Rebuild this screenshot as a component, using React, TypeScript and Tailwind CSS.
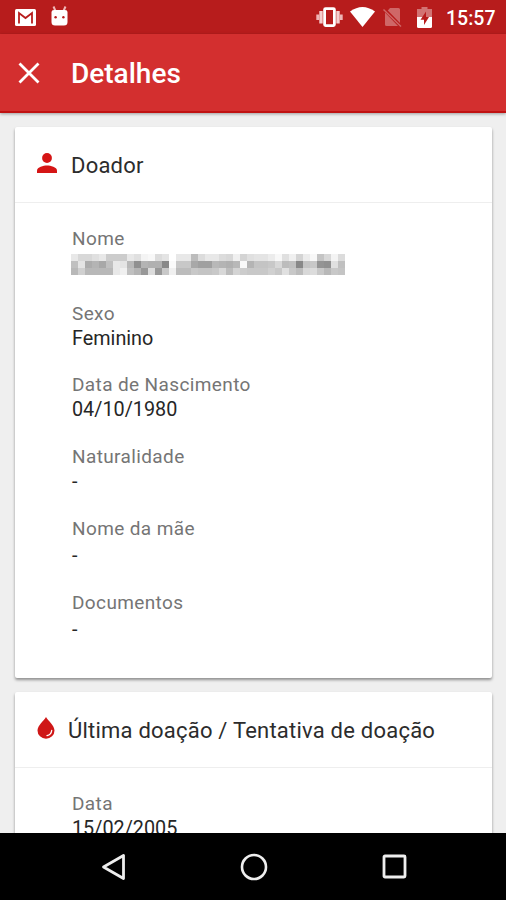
import React from "react";
import clsx from "clsx";

// Grey levels of the redacted name, one hex pair per block.
const REDACTED_ROWS = [
  "e8d8d8e0e8cccccce8e0f4f8dce4ffe8e8bcdce8e8dcd8f0d4e0e4e4ecf8e0f0d4ecf8c4d8f4dc",
  "c0e4acb4a8c0e8e4b890b4b0b088fac8c8a8a0a0b8b4b0b8f8b4c4c4c8d8bcc088c4c89490e0c0",
  "b8d0b8b8b8b8e8f0c0b498dc98c8f0bcbcc8c4c4c8d8bcd4ccc8c8c8d0c8e0c8bcd8dcc8b8c8c4",
];

const RedactedName = () => (
  <div className="flex flex-col w-[274px] h-[21px] -ml-px mt-[3px]">
    {REDACTED_ROWS.map((row) => (
      <div key={row} className="flex flex-1">
        {(row.match(/../g) ?? []).map((level, index) => (
          <span
            key={index}
            className="flex-1"
            style={{ backgroundColor: `#${level}${level}${level}` }}
          />
        ))}
      </div>
    ))}
  </div>
);

const MailIcon = () => (
  <svg className="w-[21px] h-[17px]" viewBox="0 0 21 17">
    <rect width="21" height="17" rx="1.5" fill="#fff" />
    <path
      d="M4 14.5V4L10.5 9L17 4V14.5"
      fill="none"
      stroke="#b71c1c"
      strokeWidth="1.8"
    />
  </svg>
);

const DroidIcon = () => (
  <svg className="w-[17px] h-5" viewBox="0 0 17 20">
    <path
      d="M2.5 .5L4.500 5M14.500 .5L12.500 5"
      stroke="#f0b8b8"
      strokeWidth="2"
    />
    <path
      d="M.5 6Q.5 4 3 4H14Q16.500 4 16.500 6V16Q16.500 19.500 13 19.500H4Q.5 19.500 .5 16Z"
      fill="#fff"
    />
    <circle cx="4.600" cy="11.300" r="1.200" fill="#b71c1c" />
    <circle cx="12.400" cy="11.300" r="1.200" fill="#b71c1c" />
  </svg>
);

const VibrateIcon = () => (
  <svg className="w-[27px] h-5" viewBox="0 0 27 20">
    <rect
      x="8.600"
      y="1.600"
      width="9.800"
      height="17"
      rx="1"
      fill="none"
      stroke="#fff"
      strokeWidth="2.800"
    />
    <path
      d="M5 4V16.500M22 4V16.500"
      stroke="#f6cdcd"
      strokeWidth="3.400"
    />
    <path d="M1.800 7.500V13M25.200 7.500V13" stroke="#eeb4b4" strokeWidth="3" />
  </svg>
);

const WifiIcon = () => (
  <svg className="w-[25px] h-5" viewBox="0 0 25 20">
    <path d="M0 4.500Q12.500 -4.500 25 4.500L12.500 20Z" fill="#fff" />
  </svg>
);

const NoSimIcon = () => (
  <svg className="w-[19px] h-[19px]" viewBox="0 0 19 19">
    <path
      d="M7 0H15.500Q17 0 17 1.500V15L4.800 2.500ZM2 4.500L15 18H3.500Q2 18 2 16.500Z"
      fill="#cf6767"
    />
    <path d="M.5 1.500L18 18.500" stroke="#cf6767" strokeWidth="1.400" />
  </svg>
);

const BatteryIcon = () => (
  <svg className="w-[15px] h-[21px]" viewBox="0 0 15 21">
    <path d="M4.500 0H10.500V2H15V10H0V2H4.500Z" fill="#d27373" />
    <path d="M0 10H15V19.500Q15 21 13.500 21H1.500Q0 21 0 19.500Z" fill="#fff" />
    <path d="M9 4.500L3.500 12.700H7V18L12 10H9Z" fill="#b71c1c" />
  </svg>
);

const PersonIcon = () => (
  <svg className="w-5 h-5" viewBox="0 0 20 20">
    <circle cx="10" cy="5" r="4.900" fill="#d51515" />
    <path d="M0 20V17.500C0 14 6.500 12.500 10 12.500S20 14 20 17.500V20Z" fill="#d51515" />
  </svg>
);

const DropIcon = () => (
  <svg className="w-[18px] h-[22px]" viewBox="0 0 18 22">
    <path
      d="M9 0C11 3.500 17.500 8.500 17.500 13.500A8.500 8.300 0 0 1 .5 13.500C.5 8.500 7 3.500 9 0Z"
      fill="#cf1717"
    />
    <path
      d="M14.700 13.500Q14.300 17.500 10 18.700"
      fill="none"
      stroke="#fff"
      strokeWidth="1.300"
      strokeLinecap="round"
    />
  </svg>
);

const StatusBar = () => (
  <div className="flex items-center h-[34px] shrink-0 bg-[#b71c1c] pl-[15px] pr-[10px] text-white">
    <MailIcon />
    <div className="ml-[15px] -mt-[3px]">
      <DroidIcon />
    </div>
    <div className="flex items-center ml-auto">
      <VibrateIcon />
      <div className="ml-[7px]">
        <WifiIcon />
      </div>
      <div className="ml-[8px]">
        <NoSimIcon />
      </div>
      <div className="ml-[15px]">
        <BatteryIcon />
      </div>
      <span className="ml-[14px] w-[50px] mt-[4px] text-[19.5px] leading-6 font-medium whitespace-nowrap">
        15:57
      </span>
    </div>
  </div>
);

const AppBar = () => (
  <header className="flex items-center h-[79px] shrink-0 bg-[#d32f2f] border-b-2 border-[#c01212] pl-[18px] text-white shadow-[0_1px_3px_rgba(0,0,0,0.35)] z-10">
    <svg className="w-[22px] h-[22px]" viewBox="0 0 22 22">
      <path d="M1.500 1.500L20.500 20.500M20.500 1.500L1.500 20.500" stroke="#fff" strokeWidth="2.800" />
    </svg>
    <h1 className="ml-[31px] mt-[2px] text-[28px] leading-8 font-medium">Detalhes</h1>
  </header>
);

type CardProps = {
  icon: React.ReactNode;
  title: string;
  titleClassName?: string;
  className?: string;
  children: React.ReactNode;
};

const Card = ({ icon, title, titleClassName, className, children }: CardProps) => (
  <section
    className={clsx(
      "shrink-0 bg-white rounded-[2px] shadow-[0_2px_3px_rgba(0,0,0,0.4)]",
      className,
    )}
  >
    <div className="flex items-center h-[76px] pl-[22px] border-b-[1.5px] border-[#eeeeee]">
      <div className="-mt-1">{icon}</div>
      <h2
        className={clsx(
          "mt-[3px] text-[22px] leading-7 text-[#2c2c2c]",
          titleClassName,
        )}
      >
        {title}
      </h2>
    </div>
    <dl className="pl-[57px] pt-[24px]">{children}</dl>
  </section>
);

type FieldProps = {
  label: string;
  className?: string;
  valueClassName?: string;
  children: React.ReactNode;
};

const Field = ({ label, className, valueClassName, children }: FieldProps) => (
  <div className={className}>
    <dt className="text-[19px] leading-6 tracking-[0.38px] text-[#757575]">
      {label}
    </dt>
    <dd
      className={clsx(
        "text-[19.8px] leading-[25px] text-[#262626]",
        valueClassName,
      )}
    >
      {children}
    </dd>
  </div>
);

const NavigationBar = () => (
  <nav className="flex items-center justify-between h-[67px] shrink-0 bg-black pl-[101px] pr-[99px]">
    <svg className="w-[25px] h-7" viewBox="0 0 25 28">
      <path
        d="M22.500 2.500V25.500L2.500 14Z"
        fill="none"
        stroke="#eee"
        strokeWidth="2.800"
        strokeLinejoin="round"
      />
    </svg>
    <svg className="w-7 h-7" viewBox="0 0 28 28">
      <circle cx="14" cy="14" r="12" fill="none" stroke="#eee" strokeWidth="2.600" />
    </svg>
    <svg className="w-[25px] h-[25px]" viewBox="0 0 25 25">
      <rect
        x="2"
        y="2"
        width="21"
        height="21"
        rx="1"
        fill="none"
        stroke="#eee"
        strokeWidth="2.800"
      />
    </svg>
  </nav>
);

const App = () => (
  <div className="flex flex-col h-[900px] w-[506px] overflow-hidden bg-[#efefef] font-['Roboto',sans-serif]">
    <StatusBar />
    <AppBar />
    <main className="flex flex-col flex-1 min-h-0 overflow-hidden gap-[14px] pt-[14px] pl-[15px] pr-[14px]">
      <Card
        className="h-[551px]"
        icon={<PersonIcon />}
        title="Doador"
        titleClassName="ml-[14px] tracking-[0.22px]"
      >
        <Field label="Nome">
          <RedactedName />
        </Field>
        <Field label="Sexo" className="mt-[27px]">
          Feminino
        </Field>
        <Field label="Data de Nascimento" className="mt-[22px]">
          04/10/1980
        </Field>
        <Field label="Naturalidade" className="mt-[23px]">
          -
        </Field>
        <Field label="Nome da mãe" className="mt-[23px]" valueClassName="pt-[2px]">
          -
        </Field>
        <Field label="Documentos" className="mt-[23px]" valueClassName="pt-[2px]">
          -
        </Field>
      </Card>
      <Card
        className="h-[300px]"
        icon={<DropIcon />}
        title="Última doação / Tentativa de doação"
        titleClassName="ml-[13px] tracking-[0.22px]"
      >
        <Field label="Data">15/02/2005</Field>
      </Card>
    </main>
    <NavigationBar />
  </div>
);

export default App;
